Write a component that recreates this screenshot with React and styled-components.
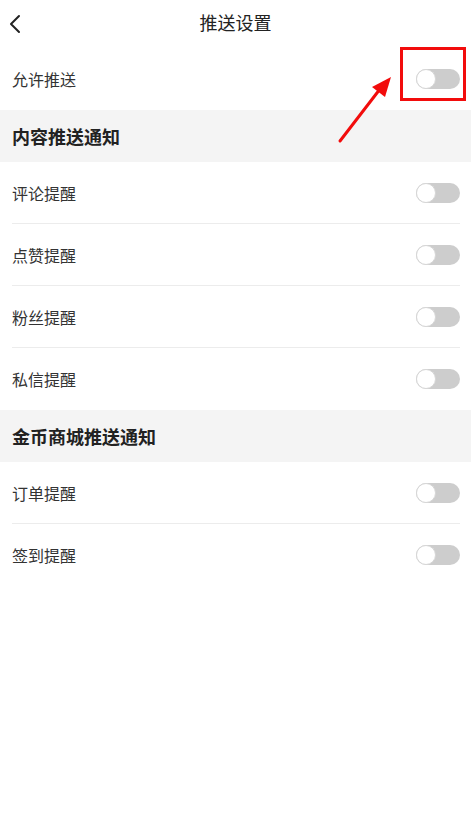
import React from "react";
import styled, { createGlobalStyle } from "styled-components";

const GlobalStyle = createGlobalStyle`
  html, body {
    margin: 0;
    padding: 0;
    background: #fff;
  }
  body {
    font-family: "Noto Sans CJK SC", "Noto Sans", sans-serif;
    color: #333;
  }
`

const Page = styled.div`
  position: relative;
  width: 471px;
  min-height: 822px;
  background: #fff;
`

const Header = styled.div`
  height: 48px;
  display: flex;
  align-items: center;
  justify-content: center;
  position: relative;
`

const BackButton = styled.div`
  position: absolute;
  left: 8px;
  top: 13px;
  width: 16px;
  height: 22px;
  display: flex;
  align-items: center;
`

const Title = styled.h1`
  margin: 0 0 4px;
  font-size: 18px;
  font-weight: 400;
  color: #222;
  line-height: 1;
`

const Row = styled.div`
  height: 62px;
  display: flex;
  align-items: center;
  justify-content: space-between;
  padding: 0 11px 0 12px;
  position: relative;
  box-sizing: border-box;
  &::after {
    content: "";
    display: ${({ divider }) => (divider ? "block" : "none")};
    position: absolute;
    left: 12px;
    right: 11px;
    bottom: 0;
    height: 1px;
    background: #ececec;
  }
`

const Label = styled.span`
  font-size: 16px;
  color: #333;
`

const SectionHeader = styled.div`
  height: 52px;
  background: #f4f4f4;
  display: flex;
  align-items: center;
  padding-left: 12px;
  font-size: 18px;
  font-weight: 700;
  color: #222;
`

const Track = styled.div`
  width: 44px;
  height: 20px;
  border-radius: 10px;
  background: #cdcdcd;
  position: relative;
`

const Knob = styled.div`
  position: absolute;
  left: 0;
  top: 0;
  width: 18px;
  height: 18px;
  border-radius: 50%;
  background: #fff;
  border: 1px solid #d6d6d6;
`

const Annotation = styled.svg`
  position: absolute;
  left: 0;
  top: 0;
  pointer-events: none;
`

function Toggle() {
  return (
    <Track>
      <Knob />
    </Track>
  )
}

const groups = [
  { title: "内容推送通知", items: ["评论提醒", "点赞提醒", "粉丝提醒", "私信提醒"] },
  { title: "金币商城推送通知", items: ["订单提醒", "签到提醒"] },
]

function App() {
  return (
    <Page>
      <GlobalStyle />
      <Header>
        <BackButton>
          <svg width="14" height="20" viewBox="0 0 14 20">
            <path d="M11 2 L3 10 L11 18" fill="none" stroke="#222" strokeWidth="2" strokeLinecap="round" strokeLinejoin="round" />
          </svg>
        </BackButton>
        <Title>推送设置</Title>
      </Header>

      <Row>
        <Label>允许推送</Label>
        <Toggle />
      </Row>

      {groups.map((group) => (
        <div key={group.title}>
          <SectionHeader>{group.title}</SectionHeader>
          {group.items.map((item, index) => (
            <Row key={item} divider={index < group.items.length - 1}>
              <Label>{item}</Label>
              <Toggle />
            </Row>
          ))}
        </div>
      ))}

      <Annotation width="471" height="160" viewBox="0 0 471 160">
        <rect x="401.5" y="48.5" width="63" height="51" fill="none" stroke="#f20c0c" strokeWidth="3" />
        <line x1="340" y1="141" x2="380" y2="89" stroke="#f20c0c" strokeWidth="3" strokeLinecap="round" />
        <polygon points="391,77 372,87 385,97" fill="#f20c0c" />
      </Annotation>
    </Page>
  )
}

export default App
